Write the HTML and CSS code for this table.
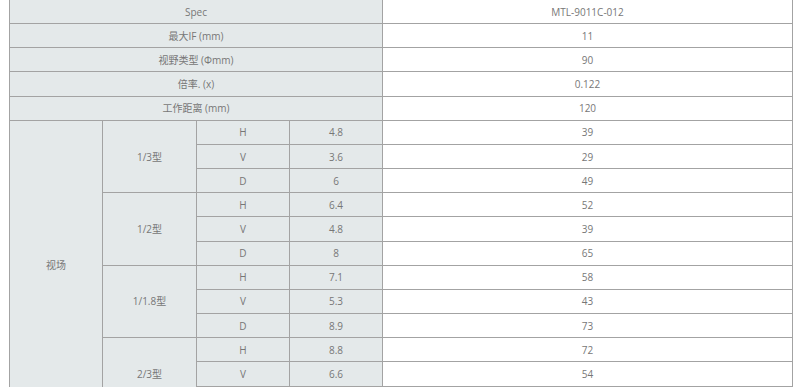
FILE: index.html
```html
<!DOCTYPE html>
<html lang="zh">
<head>
<meta charset="utf-8">
<title>Spec</title>
<link rel="stylesheet" href="styles.css">
</head>
<body>
<div class="wrap">
<table class="spec">
  <colgroup>
    <col class="c1"><col class="c2"><col class="c3"><col class="c4"><col class="c5">
  </colgroup>
  <tbody>
    <tr><td class="lab" colspan="4">Spec</td><td class="val">MTL-9011C-012</td></tr>
    <tr><td class="lab" colspan="4">最大IF (mm)</td><td class="val">11</td></tr>
    <tr><td class="lab" colspan="4">视野类型 (Φmm)</td><td class="val">90</td></tr>
    <tr><td class="lab" colspan="4">倍率. (x)</td><td class="val">0.122</td></tr>
    <tr><td class="lab" colspan="4">工作距离 (mm)</td><td class="val">120</td></tr>
    <tr><td class="lab" rowspan="12">视场</td><td class="lab" rowspan="3">1/3型</td><td class="lab">H</td><td class="lab">4.8</td><td class="val">39</td></tr>
    <tr><td class="lab">V</td><td class="lab">3.6</td><td class="val">29</td></tr>
    <tr><td class="lab">D</td><td class="lab">6</td><td class="val">49</td></tr>
    <tr><td class="lab" rowspan="3">1/2型</td><td class="lab">H</td><td class="lab">6.4</td><td class="val">52</td></tr>
    <tr><td class="lab">V</td><td class="lab">4.8</td><td class="val">39</td></tr>
    <tr><td class="lab">D</td><td class="lab">8</td><td class="val">65</td></tr>
    <tr><td class="lab" rowspan="3">1/1.8型</td><td class="lab">H</td><td class="lab">7.1</td><td class="val">58</td></tr>
    <tr><td class="lab">V</td><td class="lab">5.3</td><td class="val">43</td></tr>
    <tr><td class="lab">D</td><td class="lab">8.9</td><td class="val">73</td></tr>
    <tr><td class="lab" rowspan="3">2/3型</td><td class="lab">H</td><td class="lab">8.8</td><td class="val">72</td></tr>
    <tr><td class="lab">V</td><td class="lab">6.6</td><td class="val">54</td></tr>
    <tr><td class="lab">D</td><td class="lab">11</td><td class="val">90</td></tr>
  </tbody>
</table>
</div>
</body>
</html>
```
FILE: styles.css
```css
html, body {
  margin: 0;
  padding: 0;
  background: #ffffff;
}
.wrap {
  padding-left: 9px;
  margin-top: -1px;
}
.spec {
  border-collapse: collapse;
  table-layout: fixed;
  width: 783px;
  font-family: "Open Sans", "Noto Sans CJK SC", sans-serif;
  font-size: 10px;
  color: #777777;
}
.c1 { width: 93px; }
.c2 { width: 94px; }
.c3 { width: 93px; }
.c4 { width: 93px; }
.c5 { width: 410px; }
.spec tr {
  height: 24.17px;
}
.spec td {
  border: 1px solid #a3a3a3;
  text-align: center;
  vertical-align: middle;
  padding: 0;
  line-height: 14px;
}
.lab {
  background: #e4e9ea;
}
.val {
  background: #ffffff;
}
```
